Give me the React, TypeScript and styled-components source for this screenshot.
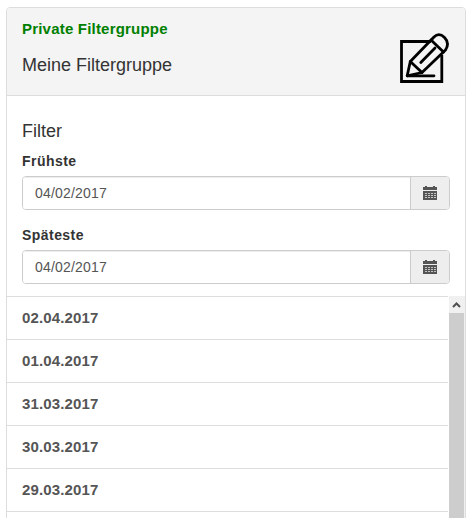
import React from "react";
import styled, { createGlobalStyle } from "styled-components";

const GlobalStyle = createGlobalStyle`
  * { box-sizing: border-box; }
  html, body { margin: 0; height: 518px; overflow: hidden; background: #fff; }
  body { font-family: "Liberation Sans", Arial, sans-serif; font-size: 14px; line-height: 20px; color: #333; }
`;

const Page = styled.main`
  height: 518px;
  padding: 7px 10px 0 6px;
  overflow: hidden;
`;

const Panel = styled.section`
  width: 460px;
  height: 600px;
  border: 1px solid #ddd;
  border-radius: 4px;
  overflow: hidden;
`;

const PanelHeader = styled.header`
  display: flex;
  justify-content: space-between;
  height: 88px;
  padding: 11px 15px 0;
  background: #f4f4f4;
  border-bottom: 1px solid #ddd;
`;

const Visibility = styled.div`
  color: #008000;
  font-size: 15px;
  font-weight: 700;
  line-height: 20px;
  letter-spacing: 0.2px;
`;

const Title = styled.h2<{ $top: number }>`
  margin: ${(p) => p.$top}px 0 0;
  font-size: 18px;
  font-weight: 400;
  line-height: 20px;
`;

const EditIcon = styled.svg`
  display: block;
  width: 52px;
  height: 52px;
  margin-top: 13px;
  fill: none;
  stroke: #000;
  stroke-width: 2.8;
  stroke-linecap: round;
  stroke-linejoin: round;
`;

const Filters = styled.div`
  height: 200px;
  padding: 25px 15px 0;
`;

const Field = styled.div<{ $top: number }>`
  margin-top: ${(p) => p.$top}px;
`;

const Label = styled.label`
  display: block;
  height: 25px;
  font-size: 14px;
  font-weight: 700;
  letter-spacing: 0.45px;
`;

const InputGroup = styled.div`
  display: flex;
  height: 34px;
  border: 1px solid #ccc;
  border-radius: 4px;
  overflow: hidden;
`;

const DateInput = styled.input`
  flex: 1;
  min-width: 0;
  padding: 0 12px;
  border: 0;
  outline: 0;
  background: #fff;
  color: #555;
  font: 14px/20px "Liberation Sans", Arial, sans-serif;
  letter-spacing: 0.2px;
  box-shadow: inset 0 1px 1px rgba(0, 0, 0, 0.075);
`;

const Addon = styled.span`
  display: flex;
  align-items: center;
  justify-content: center;
  width: 39px;
  border-left: 1px solid #ccc;
  background: #eee;
`;

const ListArea = styled.div`
  display: flex;
  height: 303px;
`;

const DateList = styled.ul`
  flex: 1;
  margin: 0 1px 0 0;
  padding: 0;
  list-style: none;
`;

const DateRow = styled.li`
  height: 43px;
  padding: 11px 15px 0;
  border-top: 1px solid #ddd;
  color: #555;
  font-size: 15px;
  font-weight: 700;
  letter-spacing: 0.15px;

  &:last-child {
    height: 44px;
    border-bottom: 1px solid #ddd;
  }
`;

const Scrollbar = styled.div`
  display: flex;
  flex-direction: column;
  width: 16px;
  background: #f0f0f0;
`;

const ScrollUp = styled.span`
  display: flex;
  height: 17px;
`;

const Thumb = styled.span`
  flex: 1;
  width: 15px;
  background: #cdcdcd;
`;

const CalendarIcon = () => (
  <svg width="14" height="14" viewBox="0 0 14 14" shapeRendering="crispEdges">
    <path fill="#555" d="M2 0h2v1h6v-1h2v1h2v3H0V1h2zM0 5h14v9H0z" />
    <path
      fill="#c4c4c4"
      d="M2 7h2v1H2zm3 0h2v1H5zm3 0h2v1H8zm3 0h2v1h-2zM2 9h2v1H2zm3 0h2v1H5zm3 0h2v1H8zm3 0h2v1h-2zM2 11h2v1H2zm3 0h2v1H5zm3 0h2v1H8zm3 0h2v1h-2z"
    />
  </svg>
);

const DateField = ({ label, top }: { label: string; top: number }) => (
  <Field $top={top}>
    <Label>{label}</Label>
    <InputGroup>
      <DateInput aria-label={label} defaultValue="04/02/2017" />
      <Addon>
        <CalendarIcon />
      </Addon>
    </InputGroup>
  </Field>
);

const dates = ["02.04.2017", "01.04.2017", "31.03.2017", "30.03.2017", "29.03.2017"];

export default function App() {
  return (
    <Page>
      <GlobalStyle />
      <Panel>
        <PanelHeader>
          <div>
            <Visibility>Private Filtergruppe</Visibility>
            <Title $top={16}>Meine Filtergruppe</Title>
          </div>
          <EditIcon viewBox="0 0 52 52">
            <path strokeLinejoin="miter" strokeLinecap="butt" d="M33 9.5H3.5V49.5H43.8V23" />
            <path d="M9.2 43.8L12.3 29.5L36 5Q41 0 46.5 5.5T47.5 18L24 40.5Z" />
            <path d="M12.3 29.5L24 40.5M33 8L45.5 20M22.8 30.5L37 16M9.2 43.8H36" />
          </EditIcon>
        </PanelHeader>
        <Filters>
          <Title as="h3" $top={0}>Filter</Title>
          <DateField label="Frühste" top={10} />
          <DateField label="Späteste" top={15} />
        </Filters>
        <ListArea>
          <DateList>
            {dates.map((date) => (
              <DateRow key={date}>{date}</DateRow>
            ))}
          </DateList>
          <Scrollbar>
            <ScrollUp>
              <svg width="16" height="17" viewBox="0 0 16 17">
                <path d="M4 11L7.5 7.5L11 11" fill="none" stroke="#505050" strokeWidth="2" />
              </svg>
            </ScrollUp>
            <Thumb />
          </Scrollbar>
        </ListArea>
      </Panel>
    </Page>
  );
}
